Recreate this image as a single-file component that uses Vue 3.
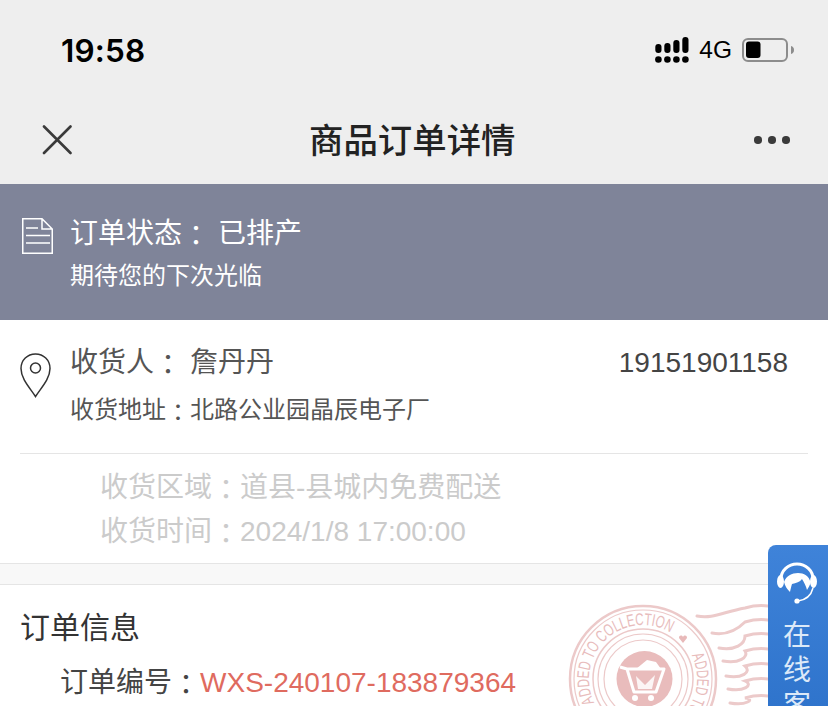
<script setup>
const receiver = { name: "詹丹丹", phone: "19151901158", address: "北路公业园晶辰电子厂" };
const delivery = [
  { label: "收货区域", value: "道县-县城内免费配送" },
  { label: "收货时间", value: "2024/1/8 17:00:00" }
];
const signalTops = [7, 6, 3, 0];
// postmark lines beside the stamp: start x, start y, end y
const waves = [
  [697, 616, 606],
  [712, 633, 620],
  [719, 648, 634],
  [723, 661, 649],
  [726, 676, 664],
  [728, 689, 679],
  [730, 703, 696]
].map(([x, y, end]) => `M${x} ${y} C${x + 16} ${y + 3} ${x + 26} ${y - 4} 745 ${end + 2} C752 ${end} 760 ${end - 1} 768 ${end}`);
</script>

<template>
  <div class="page">
    <header class="top">
      <div class="status-bar">
        <span class="clock">19:58</span>
        <div class="status-right">
          <svg width="34" height="26" viewBox="0 0 34 26" aria-hidden="true">
            <rect v-for="(top, i) in signalTops" :key="i" :x="i * 9 + 0.3" :y="top" width="6.2" :height="16 - top" rx="3" fill="#000" />
            <circle v-for="i in 4" :key="'d' + i" :cx="3.4 + (i - 1) * 9" cy="22.5" r="3.3" fill="#000" />
          </svg>
          <span class="net">4G</span>
          <svg width="52" height="24" viewBox="0 0 52 24" aria-hidden="true">
            <rect x="1" y="1" width="44" height="22" rx="5" fill="none" stroke="#8c8c8c" stroke-width="2" />
            <rect x="4" y="3.5" width="14.5" height="16.5" rx="3" fill="#000" />
            <path d="M49 8 C51 8.5 52 10 52 12 C52 14 51 15.5 49 16 Z" fill="#8c8c8c" />
          </svg>
        </div>
      </div>
      <nav class="nav-bar">
        <svg width="30" height="30" viewBox="0 0 30 30" aria-hidden="true">
          <path d="M2 1.5 L28.5 28 M28.5 1.5 L2 28" stroke="#3a3a3a" stroke-width="2.6" fill="none" stroke-linecap="round" />
        </svg>
        <h1 class="nav-title">商品订单详情</h1>
        <div class="more"><i></i><i></i><i></i></div>
      </nav>
    </header>

    <section class="banner">
      <svg class="doc" width="31" height="36" viewBox="0 0 31 36" aria-hidden="true">
        <path d="M.75 .75 H20 L30.25 11 V35.25 H.75 Z M20 .75 V11 H30.25" fill="none" stroke="#fff" stroke-width="1.5" />
        <path d="M4 10 H16 M4 17.5 H28 M4 25 H28" fill="none" stroke="#fff" stroke-width="1.5" />
      </svg>
      <div>
        <p class="state">订单状态<span class="colon">：</span><span class="state-val">已排产</span></p>
        <p class="thanks">期待您的下次光临</p>
      </div>
    </section>

    <section class="receiver">
      <div class="receiver-main">
        <svg class="pin" width="31" height="45" viewBox="0 0 31 45" aria-hidden="true">
          <path d="M15.5 43.5 C10 35 1 26 1 15.5 C1 7 7.5 1 15.5 1 C23.5 1 30 7 30 15.5 C30 26 21 35 15.5 43.5 Z" fill="none" stroke="#333" stroke-width="1.5" />
          <circle cx="15.5" cy="15" r="5" fill="none" stroke="#333" stroke-width="1.5" />
        </svg>
        <div class="receiver-text">
          <div class="receiver-row">
            <p class="who">收货人<span class="colon">：</span><span class="who-name">{{ receiver.name }}</span></p>
            <span class="phone">{{ receiver.phone }}</span>
          </div>
          <p class="addr">收货地址<span class="colon">：</span>{{ receiver.address }}</p>
        </div>
      </div>
      <div class="delivery">
        <p v-for="row in delivery" :key="row.label">{{ row.label }}<span class="colon">：</span>{{ row.value }}</p>
      </div>
    </section>

    <section class="order">
      <h2 class="order-title">订单信息</h2>
      <p class="order-no">订单编号<span class="colon">：</span><span class="order-val">WXS-240107-183879364</span></p>
      <svg class="stamp" width="208" height="106" viewBox="560 600 208 106" aria-hidden="true">
        <defs>
          <path id="stampRing" d="M643 733 A54 54 0 1 1 643 625 A54 54 0 1 1 643 733" />
        </defs>
        <g fill="none" stroke="#ecc9c9">
          <circle cx="643" cy="679" r="73" stroke-width="2.5" />
          <circle cx="643" cy="679" r="69" stroke-width="1.2" />
          <circle cx="643" cy="679" r="50" stroke-width="1.5" />
          <circle cx="643" cy="679" r="45" stroke-width="1.2" />
          <circle cx="643" cy="679" r="39" stroke-width="1.2" />
        </g>
        <text class="stamp-text"><textPath href="#stampRing" startOffset="17.8%" textLength="138" lengthAdjust="spacingAndGlyphs">ADDED TO COLLECTION</textPath></text>
        <text class="stamp-text"><textPath href="#stampRing" startOffset="67.8%" textLength="58" lengthAdjust="spacingAndGlyphs">ADDED TO</textPath></text>
        <path d="M683 643 L679 638 C679 635 682 635 683 637 C684 635 687 635 687 638 Z" fill="#e8b9b9" />
        <circle cx="644.5" cy="679" r="28" fill="#e9bcbc" />
        <path d="M620 667 L627 669 L634 692 H656 L664 669 H627" fill="none" stroke="#fff" stroke-width="3" stroke-linejoin="round" />
        <path d="M636 669 L647 660 L656 662 L661 669 Z" fill="#fff" />
        <path d="M636 676 L645 685 L655 675 L652 689 H638 Z" fill="#fff" opacity="0.85" />
        <circle cx="635" cy="698" r="3" fill="#fff" />
        <circle cx="651" cy="698" r="3" fill="#fff" />
        <g fill="none" stroke="#eccaca" stroke-width="3" stroke-linecap="round">
          <path v-for="(d, i) in waves" :key="i" :d="d" />
        </g>
      </svg>
    </section>

    <aside class="service">
      <svg width="44" height="44" viewBox="0 0 44 44" aria-hidden="true">
        <path d="M6 18 A16 15 0 0 1 38 18" fill="none" stroke="#fff" stroke-width="3" />
        <ellipse cx="5.5" cy="20.5" rx="3.5" ry="6.5" fill="#fff" />
        <ellipse cx="38.5" cy="20.5" rx="3.5" ry="6.5" fill="#fff" />
        <path d="M9 21 C11 15 17 12 23 12 C29 12 34 15 35.5 21 C35 25 33 27 32 29 C31 25 29 21 27 18 C25 21 21 22 17 23 C16 26 15.5 29 15 31 C12 28 10 25 9 21 Z" fill="#fff" />
        <path d="M38 27 C36 35 30 39 23 40" fill="none" stroke="#fff" stroke-width="1.5" />
        <circle cx="22" cy="40" r="2.6" fill="#fff" />
      </svg>
      <span class="service-text">在</span>
      <span class="service-text">线</span>
      <span class="service-text">客</span>
    </aside>
  </div>
</template>

<style scoped>
.page {
  position: relative;
  width: 828px;
  height: 706px;
  overflow: hidden;
  background: #f8f8f8;
  color: #333;
  font-family: "Liberation Sans", "Noto Sans CJK SC", sans-serif;
}

p, h1, h2 {
  margin: 0;
  font-weight: 400;
}

.colon {
  font-family: "Noto Sans CJK TC", sans-serif;
  line-height: 0;
  vertical-align: -3px;
}

.top {
  height: 184px;
  background: #eee;
}

.status-bar {
  height: 96px;
  box-sizing: border-box;
  padding: 4px 34px 0 61px;
  display: flex;
  align-items: center;
  justify-content: space-between;
}

.clock {
  font-family: Inter, "Liberation Sans", sans-serif;
  font-size: 31.5px;
  font-weight: 600;
  color: #000;
  letter-spacing: 0.2px;
}

.status-right {
  display: flex;
  align-items: center;
  gap: 10px;
}

.net {
  font-size: 24.5px;
  color: #000;
}

.nav-bar {
  height: 88px;
  display: flex;
  align-items: center;
  justify-content: space-between;
  padding: 0 38px 0 42px;
}

.nav-title {
  font-size: 34.4px;
  font-weight: 500;
  color: #222;
  transform: translate(-1px, -2px);
}

.more {
  display: flex;
  gap: 6.5px;
}

.more i {
  width: 7.5px;
  height: 7.5px;
  border-radius: 50%;
  background: #3a3a3a;
}

.banner {
  height: 136px;
  box-sizing: border-box;
  padding: 32px 0 0 22px;
  display: flex;
  align-items: flex-start;
  gap: 17px;
  background: #7f8499;
  color: #fff;
}

.state {
  font-size: 28px;
  line-height: 36px;
}

.state-val {
  margin-left: 8px;
}

.thanks {
  margin-top: 8px;
  font-size: 24px;
  line-height: 32px;
}

.doc {
  margin-top: 2px;
}

.receiver {
  height: 244px;
  box-sizing: border-box;
  padding: 0 20px;
  background: #fff;
  border-bottom: 1px solid #e5e5e5;
}

.receiver-main {
  height: 134px;
  box-sizing: border-box;
  padding-top: 25px;
  display: flex;
  align-items: flex-start;
  gap: 19px;
  border-bottom: 1px solid #e5e5e5;
}

.pin {
  margin-top: 8px;
}

.receiver-text {
  flex: 1;
}

.receiver-row {
  display: flex;
  justify-content: space-between;
  padding-right: 20px;
  line-height: 36px;
}

.who {
  font-size: 28px;
  color: #555;
}

.who-name {
  margin-left: 8px;
}

.phone {
  font-size: 28px;
  color: #444;
}

.addr {
  margin-top: 13px;
  font-size: 24px;
  line-height: 32px;
  color: #555;
}

.delivery {
  padding: 12px 0 0 80px;
  font-size: 28px;
  line-height: 44px;
  color: #cbcbcb;
}

.order {
  position: relative;
  margin-top: 20px;
  height: 122px;
  background: #fff;
  border-top: 1px solid #e5e5e5;
}

.order-title {
  padding: 25px 0 0 20px;
  font-size: 30px;
  line-height: 36px;
  color: #333;
}

.order-no {
  margin-top: 19px;
  padding-left: 60px;
  font-size: 28px;
  line-height: 36px;
  color: #444;
}

.order-val {
  color: #df6b5f;
}

.stamp {
  position: absolute;
  left: 560px;
  top: 15px;
}

.stamp-text {
  font-size: 17px;
  fill: #e8bcbc;
  font-family: "Liberation Sans", sans-serif;
}

.service {
  position: absolute;
  left: 768px;
  top: 545px;
  width: 60px;
  height: 161px;
  box-sizing: border-box;
  padding: 16px 0 0 7px;
  display: flex;
  flex-direction: column;
  align-items: flex-start;
  background: linear-gradient(#3f83d9, #2f74cc);
  border-radius: 8px 0 0 0;
  color: #dce9f8;
}

.service svg {
  flex-shrink: 0;
  margin-bottom: 13px;
}

.service-text {
  flex-shrink: 0;
  width: 44px;
  text-align: center;
  font-size: 28px;
  line-height: 35px;
}
</style>
